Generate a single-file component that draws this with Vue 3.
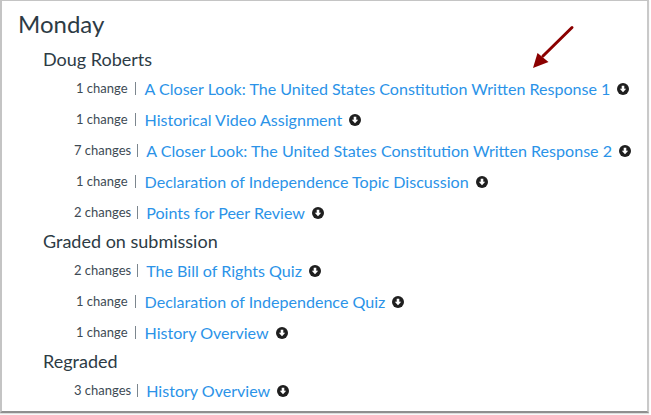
<script setup>
const groups = [
  {
    name: 'Doug Roberts',
    items: [
      { count: '1 change', title: 'A Closer Look: The United States Constitution Written Response 1' },
      { count: '1 change', title: 'Historical Video Assignment' },
      { count: '7 changes', title: 'A Closer Look: The United States Constitution Written Response 2' },
      { count: '1 change', title: 'Declaration of Independence Topic Discussion' },
      { count: '2 changes', title: 'Points for Peer Review' }
    ]
  },
  {
    name: 'Graded on submission',
    items: [
      { count: '2 changes', title: 'The Bill of Rights Quiz' },
      { count: '1 change', title: 'Declaration of Independence Quiz' },
      { count: '1 change', title: 'History Overview' }
    ]
  },
  {
    name: 'Regraded',
    items: [{ count: '3 changes', title: 'History Overview' }]
  }
];
</script>

<template>
  <div class="frame">
    <section class="panel">
      <h1>Monday</h1>
      <div v-for="group in groups" :key="group.name" class="group">
        <h2>{{ group.name }}</h2>
        <div
          v-for="item in group.items"
          :key="item.title + item.count"
          class="row"
          :class="{ single: item.count.startsWith('1 ') }"
        >
          <span class="count">{{ item.count }}</span>
          <span class="sep"></span>
          <a class="link">{{ item.title }}</a>
          <svg class="down" viewBox="0 0 12 12" width="12" height="12">
            <circle cx="6" cy="6" r="6" fill="#1f1f1f" />
            <path d="M4.7 2.8h2.6v3h1.9L6 9.3 2.8 5.8h1.9z" fill="#fff" />
          </svg>
        </div>
      </div>
    </section>
    <svg class="arrow" viewBox="0 0 50 50" width="50" height="50">
      <path d="M39 2.5 10 31" stroke="#8b0000" stroke-width="3" stroke-linecap="round" fill="none" />
      <path d="M0 43 4.500 28 15.500 37z" fill="#8b0000" />
    </svg>
  </div>
</template>

<style>
html,
body {
  margin: 0;
  background: #fff;
}
</style>

<style scoped>
.frame {
  position: relative;
  width: 651px;
  height: 415px;
  overflow: hidden;
  background: #fff;
  font-family: Lato, "Open Sans", sans-serif;
}

.panel {
  box-sizing: border-box;
  width: 649px;
  height: 413px;
  padding: 8px 0 0 16px;
  border: 1px solid #c4c4c4;
  border-left-width: 2px;
  border-right: 2px solid #c9c9c9;
  border-bottom: 2px solid #8f8f8f;
  box-shadow: 0 1px 1px #dcdcdc;
  background: #fff;
}

h1 {
  margin: 0 0 8px;
  font-size: 24px;
  line-height: 29px;
  font-weight: 400;
  color: #2d3b45;
}

h2 {
  margin: 0;
  padding-left: 25px;
  font-size: 18px;
  line-height: 27px;
  font-weight: 400;
  color: #2d3b45;
}

.row {
  display: flex;
  align-items: center;
  height: 31px;
  padding-left: 56px;
}

.row.single {
  padding-left: 58px;
}

.count {
  font-size: 13px;
  color: #3d4a54;
  position: relative;
  top: -1px;
}

.sep {
  width: 1px;
  height: 13px;
  margin: 0 8px 0 6px;
  background: #7c868e;
}

.single .sep {
  margin: 0 9px 0 7px;
}

.link {
  font-size: 16.07px;
  color: #2b93e8;
}

.down {
  margin-left: 7px;
}

.arrow {
  position: absolute;
  left: 533px;
  top: 25px;
}
</style>
